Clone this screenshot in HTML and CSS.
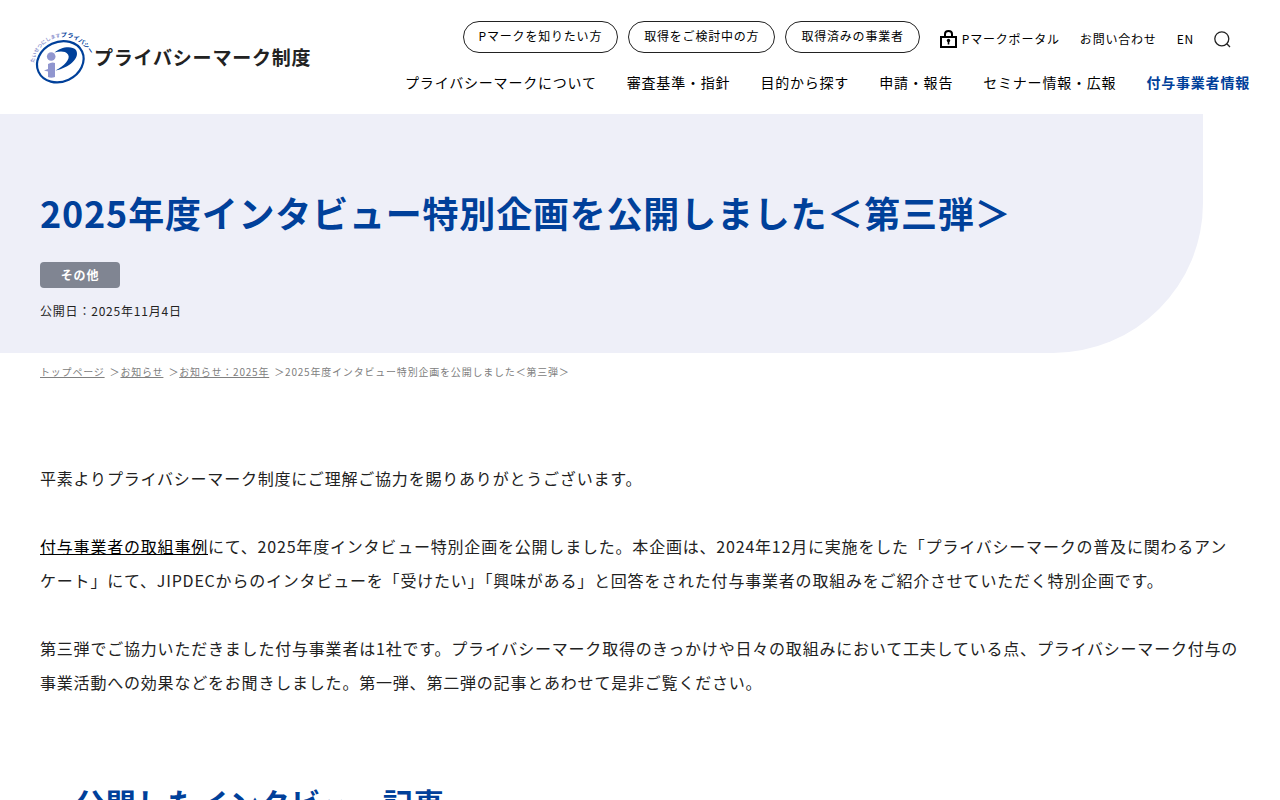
FILE: index.html
```html
<!DOCTYPE html>
<html lang="ja">
<head>
    <meta charset="UTF-8">
    <meta name="viewport" content="width=device-width, initial-scale=1.0">
    <title>2025年度インタビュー特別企画を公開しました＜第三弾＞</title>
    <link rel="stylesheet" href="styles.css">
</head>
<body>
    <header class="header">
        <a class="logo" href="#">
            <svg class="logo-mark" viewBox="0 0 60 54" aria-hidden="true">
                <defs>
                    <path id="logo-arc" d="M4 33 C7 8 42 -6 60 24"/>
                </defs>
                <text class="logo-arc-text"><textPath href="#logo-arc"><tspan class="logo-light">たいせつにします</tspan><tspan class="logo-dark">プライバシー</tspan></textPath></text>
                <ellipse cx="30.300" cy="31.700" rx="24" ry="19.800" transform="rotate(-25 30.3 31.7)" fill="#fff" stroke="#00409a" stroke-width="2.2"/>
                <path d="M24.500 22.500 C30 17 42 15 46 20 C50.500 28 39 38 25.500 40.500 C34 36 41 29 38 24.500 C35 20.500 29 21.500 24.500 22.500 Z" fill="#00409a"/>
                <circle cx="21.200" cy="26.500" r="4.300" fill="#9096cf"/>
                <path d="M18 34 Q22 31.500 25 33 V47 Q21 48.500 18 47 V41.500 L14 40.500 L18 39 Z" fill="#9096cf"/>
            </svg>
            <span class="logo-name">プライバシーマーク制度</span>
        </a>
        <div class="header-menu">
            <div class="header-top">
                <ul class="pills">
                    <li><a href="#">Pマークを知りたい方</a></li>
                    <li><a href="#">取得をご検討中の方</a></li>
                    <li><a href="#">取得済みの事業者</a></li>
                </ul>
                <ul class="sub-links">
                    <li>
                        <a class="portal" href="#">
                            <svg width="17" height="18" viewBox="0 0 17 18" aria-hidden="true">
                                <path d="M5 6 V4 Q5 1 8.500 1 Q12 1 12 4 V6" fill="none" stroke="#000" stroke-width="2"/>
                                <rect x="1" y="7" width="15" height="10" fill="#fff" stroke="#000" stroke-width="2"/>
                                <circle cx="8.500" cy="10.500" r="1.700"/>
                                <path d="M7.700 11 H9.300 V14.500 H7.700 Z"/>
                            </svg>
                            Pマークポータル
                        </a>
                    </li>
                    <li><a href="#">お問い合わせ</a></li>
                    <li><a href="#">EN</a></li>
                </ul>
                <button class="search" type="button" aria-label="検索">
                    <svg width="17" height="17" viewBox="0 0 17 17" aria-hidden="true">
                        <circle cx="7.800" cy="7.800" r="7" fill="none" stroke="#222" stroke-width="1.300"/>
                        <path d="M12.800 12.800 L16 16" stroke="#222" stroke-width="1.300"/>
                    </svg>
                </button>
            </div>
            <nav>
                <ul class="main-nav">
                    <li><a href="#">プライバシーマークについて</a></li>
                    <li><a href="#">審査基準・指針</a></li>
                    <li><a href="#">目的から探す</a></li>
                    <li><a href="#">申請・報告</a></li>
                    <li><a href="#">セミナー情報・広報</a></li>
                    <li><a class="current" href="#">付与事業者情報</a></li>
                </ul>
            </nav>
        </div>
    </header>

    <main>
        <div class="hero">
            <h1>2025年度インタビュー特別企画を公開しました＜第三弾＞</h1>
            <span class="tag">その他</span>
            <p class="date">公開日：2025年11月4日</p>
        </div>

        <ol class="breadcrumb">
            <li><a href="#">トップページ</a></li>
            <li><a href="#">お知らせ</a></li>
            <li><a href="#">お知らせ：2025年</a></li>
            <li>2025年度インタビュー特別企画を公開しました＜第三弾＞</li>
        </ol>

        <article class="content">
            <p>平素よりプライバシーマーク制度にご理解ご協力を賜りありがとうございます。</p>
            <p><a href="#">付与事業者の取組事例</a>にて、2025年度インタビュー特別企画を公開しました。本企画は、2024年12月に実施をした「プライバシーマークの普及に関わるアンケート」にて、JIPDECからのインタビューを「受けたい」「興味がある」と回答をされた付与事業者の取組みをご紹介させていただく特別企画です。</p>
            <p>第三弾でご協力いただきました付与事業者は1社です。プライバシーマーク取得のきっかけや日々の取組みにおいて工夫している点、プライバシーマーク付与の事業活動への効果などをお聞きしました。第一弾、第二弾の記事とあわせて是非ご覧ください。</p>
            <h2>公開したインタビュー記事</h2>
        </article>
    </main>
</body>
</html>
```
FILE: styles.css
```css
* {
    box-sizing: border-box;
}
body {
    margin: 0;
    font-family: "Noto Sans CJK JP", "Noto Sans", sans-serif;
    font-size: 16px;
    letter-spacing: 0.05em;
    color: #222;
    background-color: #fff;
}
ul, ol {
    margin: 0;
    padding: 0;
    list-style: none;
}
a {
    color: #000;
    text-decoration: none;
}
.header {
    display: flex;
    justify-content: space-between;
    align-items: flex-start;
    height: 114px;
    padding: 21px 30px 0;
}
.logo {
    display: flex;
    align-items: center;
    gap: 4px;
    margin-top: 9px;
    color: #222;
}
.logo-mark {
    width: 60px;
    height: 54px;
    overflow: visible;
}
.logo-arc-text {
    font-size: 6px;
    font-weight: bold;
    letter-spacing: 0;
}
.logo-light {
    font-size: 5px;
    fill: #9096cf;
}
.logo-dark {
    fill: #00409a;
}
.logo-name {
    font-size: 19px;
    font-weight: bold;
    line-height: 28px;
}
.header-top {
    display: flex;
    justify-content: flex-end;
    align-items: center;
    padding-right: 19px;
    font-size: 12px;
}
.pills {
    display: flex;
    gap: 10px;
    margin-right: 20px;
}
.pills a {
    display: block;
    padding: 0 15px 2px;
    line-height: 28px;
    border: 1px solid #222;
    border-radius: 16px;
}
.sub-links {
    display: flex;
    gap: 20px;
    margin-right: 20px;
    padding-top: 4px;
    line-height: 18px;
}
.portal {
    display: flex;
    align-items: center;
    gap: 5px;
}
.search {
    display: flex;
    padding: 4px 0 0;
    border: 0;
    background: none;
    cursor: pointer;
}
.main-nav {
    display: flex;
    justify-content: flex-end;
    gap: 30px;
    margin-top: 19px;
    font-size: 14px;
    line-height: 21px;
}
.main-nav .current {
    font-weight: bold;
    color: #00409a;
}
.hero {
    width: 94%;
    padding: 71px 40px 32px;
    background-color: #eeeff8;
    border-bottom-right-radius: 150px;
}
h1 {
    margin: 0 0 23px;
    font-size: 36px;
    line-height: 54px;
    color: #00409a;
}
.tag {
    display: block;
    width: 80px;
    font-size: 12px;
    font-weight: bold;
    line-height: 26px;
    text-align: center;
    color: #fff;
    background-color: #808592;
    border-radius: 4px;
}
.date {
    margin: 13px 0 0;
    font-size: 12px;
    line-height: 20px;
}
.breadcrumb {
    display: flex;
    flex-wrap: wrap;
    padding: 11px 40px 0;
    font-size: 10px;
    line-height: 16px;
    color: #808080;
}
.breadcrumb a {
    color: #808080;
    text-decoration: underline;
}
.breadcrumb li + li::before {
    content: "＞";
    margin-left: 5px;
}
.content {
    padding: 81px 40px 0;
    line-height: 34px;
}
.content p {
    margin: 0 0 34px;
}
.content a {
    text-decoration: underline;
}
.content h2 {
    margin: 82px 0 40px;
    padding-left: 35px;
    font-size: 30px;
    line-height: 42px;
    color: #00409a;
}
```
